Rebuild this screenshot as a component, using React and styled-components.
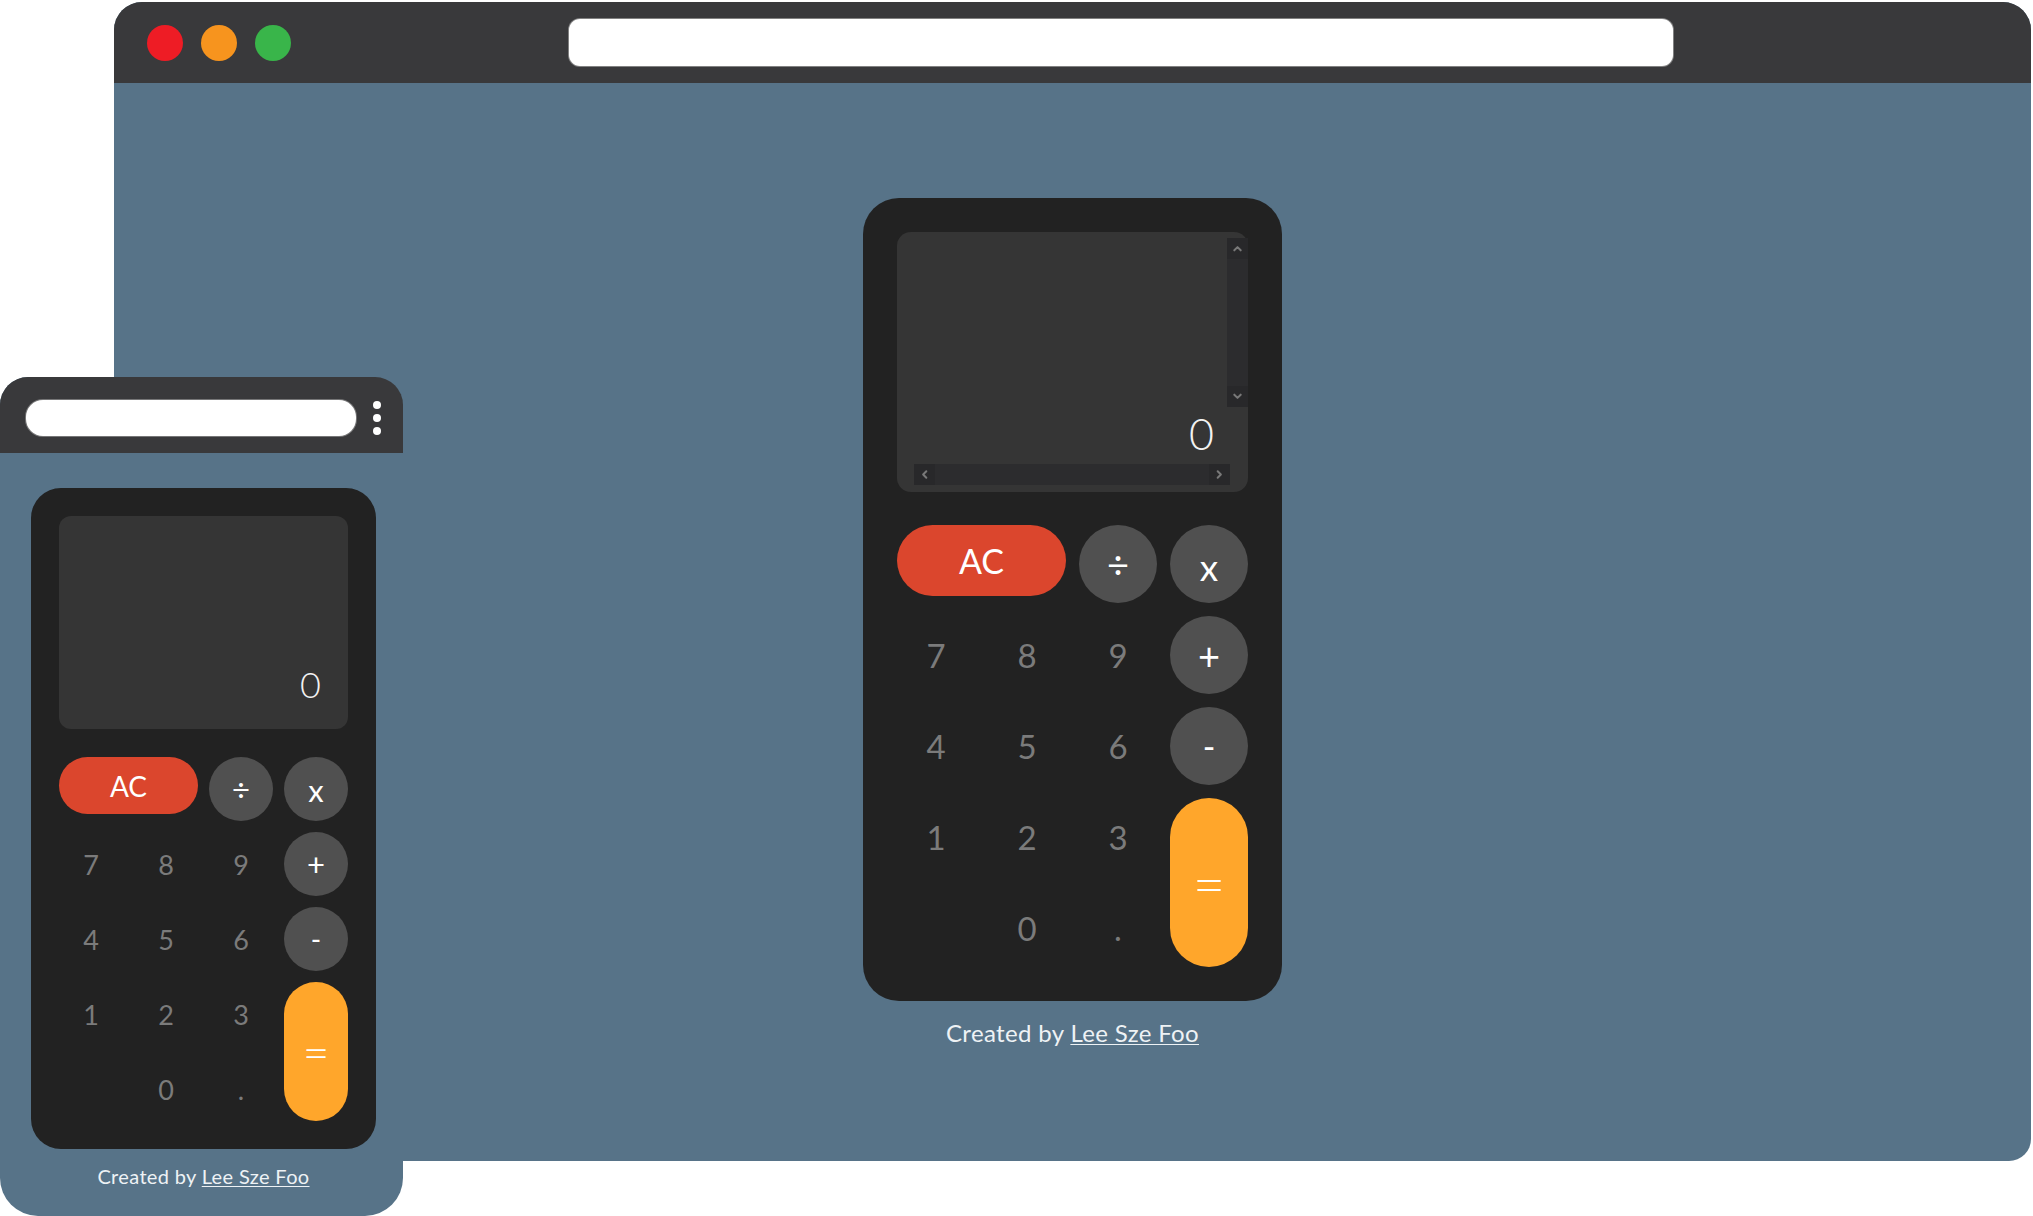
import React from "react";
import styled, { createGlobalStyle } from "styled-components";

const GlobalStyle = createGlobalStyle`
  html, body { margin: 0; padding: 0; background: #ffffff; }
  body { overflow: hidden; font-family: Lato, "Noto Sans", "Liberation Sans", sans-serif; }
  * { box-sizing: border-box; }
`;

const LG = {
  pad: 34, dispH: 260, dispR: 14, gapDK: 33, col: 78, gap: 13, acH: 71, r: 36,
  zero: 43, zeroPR: 34, zeroPB: 32, digit: 33, ac: 34, op: 38, minus: 34, times: 37, eq: 56,
  credit: 24, creditMT: 18,
};
const SM = {
  pad: 28, dispH: 213, dispR: 12, gapDK: 28, col: 64, gap: 11, acH: 57, r: 30,
  zero: 36, zeroPR: 27, zeroPB: 23, digit: 27, ac: 28, op: 31, minus: 28, times: 31, eq: 46,
  credit: 20, creditMT: 15,
};

const Stage = styled.div`
  position: relative;
  width: 2033px;
  height: 1216px;
  overflow: hidden;
  background: #ffffff;
`;

const DesktopWindow = styled.div`
  position: absolute;
  left: 114px;
  top: 2px;
  width: 1917px;
  height: 1159px;
  border-radius: 28px 28px 22px 22px;
  overflow: hidden;
  background: #577388;
  display: flex;
  flex-direction: column;
`;

const TitleBar = styled.div`
  height: 81px;
  flex: none;
  background: #39393b;
  display: flex;
  align-items: center;
  padding-left: 33px;
`;

const Lights = styled.div`
  display: flex;
  gap: 18px;
`;

const Light = styled.span`
  width: 36px;
  height: 36px;
  border-radius: 50%;
  background: ${(p) => p.$c};
`;

const AddressBar = styled.div`
  margin-left: 278px;
  width: 1104px;
  height: 47px;
  background: #ffffff;
  border-radius: 11px;
  box-shadow: 0 0 0 1px rgba(160, 160, 160, 0.7);
`;

const DesktopBody = styled.div`
  flex: 1;
  display: flex;
  flex-direction: column;
  align-items: center;
  padding-top: 115px;
`;

const MobileWindow = styled.div`
  position: absolute;
  left: 0;
  top: 377px;
  width: 403px;
  height: 839px;
  border-radius: 28px 28px 38px 38px;
  overflow: hidden;
  background: #577388;
  display: flex;
  flex-direction: column;
`;

const MobileBar = styled.div`
  height: 76px;
  flex: none;
  background: #39393b;
  display: flex;
  align-items: center;
  padding: 6px 0 0 26px;
`;

const MobileAddress = styled.div`
  width: 330px;
  height: 36px;
  background: #ffffff;
  border-radius: 17px;
  box-shadow: 0 0 0 1px rgba(160, 160, 160, 0.6);
`;

const Kebab = styled.div`
  margin-left: 17px;
  display: flex;
  flex-direction: column;
  gap: 5px;
`;

const KebabDot = styled.span`
  width: 8px;
  height: 8px;
  border-radius: 50%;
  background: #ffffff;
`;

const MobileBody = styled.div`
  flex: 1;
  display: flex;
  flex-direction: column;
  align-items: center;
  padding: 35px 0 0 4px;
`;

const Card = styled.div`
  background: #222222;
  border-radius: ${(p) => p.$s.r}px;
  padding: ${(p) => p.$s.pad}px;
  display: flex;
  flex-direction: column;
  gap: ${(p) => p.$s.gapDK}px;
`;

const Display = styled.div`
  position: relative;
  height: ${(p) => p.$s.dispH}px;
  border-radius: ${(p) => p.$s.dispR}px;
  background: #353535;
  display: flex;
  align-items: flex-end;
  justify-content: flex-end;
  padding: 0 ${(p) => p.$s.zeroPR}px ${(p) => p.$s.zeroPB}px 0;
`;

const Readout = styled.span`
  color: #f2f2f2;
  font-family: Lato, "Noto Sans", sans-serif;
  font-weight: 300;
  font-size: ${(p) => p.$s.zero}px;
  line-height: 1.2;
`;

const VScroll = styled.div`
  position: absolute;
  right: 0;
  top: 6px;
  width: 21px;
  height: 169px;
  background: #2c2c2e;
  display: flex;
  flex-direction: column;
  justify-content: space-between;
`;

const HScroll = styled.div`
  position: absolute;
  left: 17px;
  bottom: 7px;
  width: 316px;
  height: 21px;
  background: #2c2c2e;
  display: flex;
  justify-content: space-between;
`;

const ScrollBtn = styled.div`
  width: 21px;
  height: 21px;
  background: #28282a;
  display: flex;
  align-items: center;
  justify-content: center;
`;

const Keypad = styled.div`
  display: grid;
  grid-template-columns: repeat(4, ${(p) => p.$s.col}px);
  grid-auto-rows: ${(p) => p.$s.col}px;
  gap: ${(p) => p.$s.gap}px;
`;

const variantStyles = {
  digit: (s) => `background: transparent; color: #7b7b7b; font-size: ${s.digit}px;`,
  op: (s) => `background: #505050; color: #ffffff; font-size: ${s.op}px;`,
  minus: (s) => `background: #505050; color: #ffffff; font-size: ${s.minus}px;`,
  times: (s) => `background: #505050; color: #ffffff; font-size: ${s.times}px; padding-top: ${Math.round(s.col * 0.05)}px;`,
  clear: (s) => `background: #db462d; color: #ffffff; font-size: ${s.ac}px; grid-column: span 2; height: ${s.acH}px; align-self: start;`,
  equals: (s) => `background: #ffa62b; color: #ffffff; font-size: ${s.eq}px; font-weight: 300; grid-row: span 2;`,
};

const Key = styled.button`
  border: none;
  margin: 0;
  padding: 0;
  border-radius: ${(p) => p.$s.col / 2}px;
  font-family: Lato, "Noto Sans", sans-serif;
  font-weight: 400;
  line-height: 1;
  display: flex;
  align-items: center;
  justify-content: center;
  cursor: pointer;
  ${(p) => variantStyles[p.$v](p.$s)}
  ${(p) => (p.$start ? `grid-column-start: ${p.$start};` : "")}
`;

const Credit = styled.p`
  margin: ${(p) => p.$s.creditMT}px 0 0;
  color: #eef2f5;
  font-family: Lato, "Noto Sans", sans-serif;
  font-size: ${(p) => p.$s.credit}px;
  letter-spacing: 0.35px;
  line-height: 1.2;
`;

const CreditLink = styled.a`
  color: inherit;
  text-decoration: underline;
  text-underline-offset: 2px;
  text-decoration-thickness: 1px;
`;

const Chevron = ({ dir }) => {
  const rot = { up: 0, down: 180, left: -90, right: 90 }[dir];
  return (
    <svg width="11" height="11" viewBox="0 0 12 12" style={{ transform: `rotate(${rot}deg)` }}>
      <polyline points="2.5,8 6,4.5 9.5,8" fill="none" stroke="#787878" strokeWidth="2.2" strokeLinecap="round" strokeLinejoin="round" />
    </svg>
  );
};

const Calculator = ({ s, scrollbars }) => (
  <>
    <Card $s={s}>
      <Display $s={s}>
        <Readout $s={s}>0</Readout>
        {scrollbars && (
          <>
            <VScroll>
              <ScrollBtn><Chevron dir="up" /></ScrollBtn>
              <ScrollBtn><Chevron dir="down" /></ScrollBtn>
            </VScroll>
            <HScroll>
              <ScrollBtn><Chevron dir="left" /></ScrollBtn>
              <ScrollBtn><Chevron dir="right" /></ScrollBtn>
            </HScroll>
          </>
        )}
      </Display>
      <Keypad $s={s}>
        <Key $s={s} $v="clear">AC</Key>
        <Key $s={s} $v="op">÷</Key>
        <Key $s={s} $v="times">x</Key>
        <Key $s={s} $v="digit">7</Key>
        <Key $s={s} $v="digit">8</Key>
        <Key $s={s} $v="digit">9</Key>
        <Key $s={s} $v="op">+</Key>
        <Key $s={s} $v="digit">4</Key>
        <Key $s={s} $v="digit">5</Key>
        <Key $s={s} $v="digit">6</Key>
        <Key $s={s} $v="minus">-</Key>
        <Key $s={s} $v="digit">1</Key>
        <Key $s={s} $v="digit">2</Key>
        <Key $s={s} $v="digit">3</Key>
        <Key $s={s} $v="equals">=</Key>
        <Key $s={s} $v="digit" $start={2}>0</Key>
        <Key $s={s} $v="digit">.</Key>
      </Keypad>
    </Card>
    <Credit $s={s}>
      Created by <CreditLink href="#">Lee Sze Foo</CreditLink>
    </Credit>
  </>
);

export default function App() {
  return (
    <>
      <GlobalStyle />
      <Stage>
        <DesktopWindow>
          <TitleBar>
            <Lights>
              <Light $c="#ee1c25" />
              <Light $c="#f7941e" />
              <Light $c="#39b54a" />
            </Lights>
            <AddressBar />
          </TitleBar>
          <DesktopBody>
            <Calculator s={LG} scrollbars />
          </DesktopBody>
        </DesktopWindow>
        <MobileWindow>
          <MobileBar>
            <MobileAddress />
            <Kebab>
              <KebabDot />
              <KebabDot />
              <KebabDot />
            </Kebab>
          </MobileBar>
          <MobileBody>
            <Calculator s={SM} />
          </MobileBody>
        </MobileWindow>
      </Stage>
    </>
  );
}
